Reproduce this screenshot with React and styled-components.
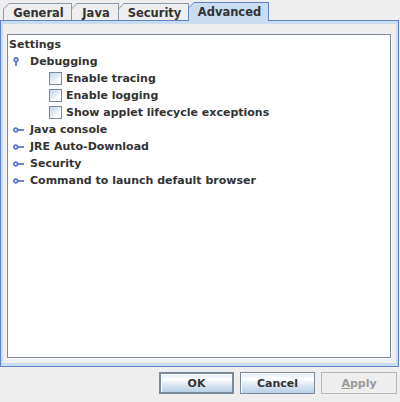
import styled, { createGlobalStyle } from 'styled-components';

const GlobalStyle = createGlobalStyle`
  html, body {
    margin: 0;
    padding: 0;
    background: #eeeeee;
  }
  body {
    font-family: "DejaVu Sans", "Liberation Sans", sans-serif;
    font-size: 11px;
    font-weight: bold;
    color: #333333;
  }
`;

// Fenêtre principale
const Window = styled.div`
  width: 400px;
  height: 402px;
  display: flex;
  flex-direction: column;
  background: #eeeeee;
  overflow: hidden;
`;

const TabStrip = styled.div`
  height: 20px;
  display: flex;
  align-items: flex-end;
  padding-left: 3px;
`;

const TabShape = styled.div`
  position: relative;
  z-index: ${(p) => (p.selected ? 2 : 1)};
  width: ${(p) => p.width}px;
  height: ${(p) => (p.selected ? 19 : 17)}px;
  margin-bottom: ${(p) => (p.selected ? -1 : 0)}px;
  margin-right: -1px;
  background: ${(p) => (p.selected ? '#6382bf' : '#8a9aab')};
  clip-path: polygon(6px 0, 100% 0, 100% 100%, 0 100%, 0 6px);
  display: flex;
`;

const TabFace = styled.div`
  flex: 1;
  margin: 1px 1px 0 1px;
  background: ${(p) => (p.selected ? '#c8ddf2' : '#eeeeee')};
  clip-path: polygon(5px 0, 100% 0, 100% 100%, 0 100%, 0 5px);
  display: flex;
  align-items: center;
  justify-content: center;
  font-size: 11.5px;
  padding-top: ${(p) => (p.selected ? 0 : 1)}px;
  padding-left: 2px;
`;

const Panel = styled.div`
  width: 399px;
  height: 347px;
  box-sizing: border-box;
  border: 1px solid #6382bf;
  display: flex;
`;

const PanelBand = styled.div`
  flex: 1;
  display: flex;
  border-style: solid;
  border-color: #c8ddf2;
  border-width: 3px 2px 3px 2px;
  padding: 10px 5px 5px 4px;
`;

const TreeBox = styled.div`
  flex: 1;
  background: #ffffff;
  border: 1px solid #7a8a99;
  box-shadow: 1px 1px 0 #ffffff;
  padding-top: 1px;
`;

const Row = styled.div`
  height: 17px;
  display: flex;
  align-items: center;
  padding-left: ${(p) => p.indent}px;
  white-space: nowrap;
`;

const Handle = styled.span`
  width: 17px;
  display: flex;
  align-items: center;
`;

const Check = styled.span`
  width: 11px;
  height: 11px;
  border: 1px solid #7a8a99;
  background: linear-gradient(135deg, #c4d7ec 0%, #dde8f3 40%, #ffffff 75%, #f2f6fb 100%);
  margin-right: 4px;
`;

const Label = styled.span`
  line-height: 17px;
`;

const ButtonBar = styled.div`
  flex: 1;
  display: flex;
  justify-content: flex-end;
  align-items: flex-start;
  gap: 6px;
  padding: 5px 3px 0 0;
`;

const Button = styled.button`
  width: ${(p) => p.width}px;
  height: 22px;
  box-sizing: border-box;
  font-family: "DejaVu Sans", "Liberation Sans", sans-serif;
  font-size: 11px;
  font-weight: bold;
  color: ${(p) => (p.disabled ? '#999999' : '#333333')};
  border: ${(p) => (p.primary ? '2px' : '1px')} solid ${(p) => (p.disabled ? '#b8b8b8' : '#7a8a99')};
  background: ${(p) =>
    p.disabled
      ? '#eeeeee'
      : 'linear-gradient(to bottom, #dde8f3 0%, #ffffff 30%, #dde8f3 60%, #b8cfe5 100%)'};
  box-shadow: ${(p) => (p.disabled ? 'none' : 'inset 1px 1px 0 #ffffff')};
  padding: 0;
  margin: 0;
  u {
    text-decoration: underline;
  }
`;

const tabs = [
  { label: 'General', width: 69 },
  { label: 'Java', width: 48 },
  { label: 'Security', width: 71 },
  { label: 'Advanced', width: 81, selected: true },
];

const KeyOpen = () => (
  <svg width="6" height="10" viewBox="0 0 6 10">
    <circle cx="3" cy="2.8" r="1.8" fill="none" stroke="#5a7bbd" strokeWidth="1.8" />
    <line x1="3" y1="4.6" x2="3" y2="9" stroke="#5a7bbd" strokeWidth="1.8" />
  </svg>
);

const KeyClosed = () => (
  <svg width="12" height="6" viewBox="0 0 12 6">
    <circle cx="2.8" cy="3" r="1.8" fill="none" stroke="#5a7bbd" strokeWidth="1.8" />
    <line x1="4.6" y1="3" x2="11" y2="3" stroke="#5a7bbd" strokeWidth="1.8" />
  </svg>
);

const options = ['Enable tracing', 'Enable logging', 'Show applet lifecycle exceptions'];
const groups = ['Java console', 'JRE Auto-Download', 'Security', 'Command to launch default browser'];

export default function App() {
  return (
    <Window>
      <GlobalStyle />
      <TabStrip>
        {tabs.map((t) => (
          <TabShape key={t.label} width={t.width} selected={t.selected}>
            <TabFace selected={t.selected}>{t.label}</TabFace>
          </TabShape>
        ))}
      </TabStrip>
      <Panel>
        <PanelBand>
          <TreeBox>
            <Row indent={1}>
              <Label>Settings</Label>
            </Row>
            <Row indent={5}>
              <Handle><KeyOpen /></Handle>
              <Label>Debugging</Label>
            </Row>
            {options.map((o) => (
              <Row key={o} indent={41}>
                <Check />
                <Label>{o}</Label>
              </Row>
            ))}
            {groups.map((g) => (
              <Row key={g} indent={5}>
                <Handle><KeyClosed /></Handle>
                <Label>{g}</Label>
              </Row>
            ))}
          </TreeBox>
        </PanelBand>
      </Panel>
      <ButtonBar>
        <Button primary width={75}>OK</Button>
        <Button width={75}>Cancel</Button>
        <Button disabled width={76}><u>A</u>pply</Button>
      </ButtonBar>
    </Window>
  );
}
